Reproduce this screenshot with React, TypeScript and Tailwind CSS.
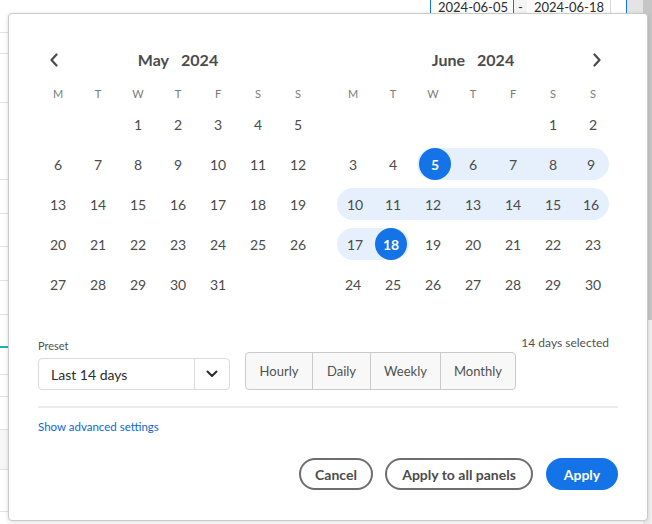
import { useState } from "react";

type Week = (number | null)[];

const WEEKDAYS = ["M", "T", "W", "T", "F", "S", "S"];
const RANGE_START = 5;
const RANGE_END = 18;

function buildWeeks(offset: number, days: number): Week[] {
  const cells: (number | null)[] = [];
  for (let i = 0; i < offset; i++) cells.push(null);
  for (let d = 1; d <= days; d++) cells.push(d);
  while (cells.length % 7 !== 0) cells.push(null);
  const weeks: Week[] = [];
  for (let i = 0; i < cells.length; i += 7) weeks.push(cells.slice(i, i + 7));
  return weeks;
}

function ChevronLeft() {
  return (
    <svg width="10" height="14" viewBox="0 0 10 14" fill="none">
      <path d="M7.5 1.5 L2.5 7 L7.5 12.5" stroke="#4b4b4b" strokeWidth="2.2" strokeLinecap="round" strokeLinejoin="round" />
    </svg>
  );
}

function ChevronRight() {
  return (
    <svg width="10" height="14" viewBox="0 0 10 14" fill="none">
      <path d="M2.5 1.5 L7.5 7 L2.5 12.5" stroke="#4b4b4b" strokeWidth="2.2" strokeLinecap="round" strokeLinejoin="round" />
    </svg>
  );
}

function ChevronDown() {
  return (
    <svg width="12" height="8" viewBox="0 0 12 8" fill="none">
      <path d="M1.5 1.5 L6 6 L10.5 1.5" stroke="#2c2c2c" strokeWidth="2" strokeLinecap="round" strokeLinejoin="round" />
    </svg>
  );
}

function Month({
  name,
  weeks,
  side,
  highlight,
}: {
  name: string;
  weeks: Week[];
  side: "left" | "right";
  highlight: boolean;
}) {
  return (
    <div className="w-[280px]">
      <div className="flex h-6 items-center">
        <div className="flex w-8 justify-center">{side === "left" ? <ChevronLeft /> : null}</div>
        <div className="flex flex-1 justify-center gap-3 text-[16px] font-bold text-[#4b4b4b]">
          <span>{name}</span>
          <span>2024</span>
        </div>
        <div className="flex w-8 justify-center">{side === "right" ? <ChevronRight /> : null}</div>
      </div>

      <div className="mt-3 grid h-5 grid-cols-7 items-center text-[11px] text-[#7a7a7a]">
        {WEEKDAYS.map((day, index) => (
          <span key={index} className="text-center">
            {day}
          </span>
        ))}
      </div>

      {weeks.map((week, row) => (
        <div key={row} className="grid grid-cols-7">
          {week.map((day, col) => {
            if (day === null) return <div key={col} className="h-10" />;

            const inRange = highlight && day >= RANGE_START && day <= RANGE_END;
            const isEdge = highlight && (day === RANGE_START || day === RANGE_END);
            const roundLeft = day === RANGE_START || col === 0;
            const roundRight = day === RANGE_END || col === 6;

            return (
              <div key={col} className="flex h-10 items-center">
                <div
                  className={`flex h-8 flex-1 items-center justify-center ${
                    inRange ? "bg-[#e6f0fc]" : ""
                  } ${inRange && roundLeft ? "ml-1 rounded-l-full" : ""} ${
                    inRange && roundRight ? "mr-1 rounded-r-full" : ""
                  }`}
                >
                  {isEdge ? (
                    <span className="flex h-8 w-8 items-center justify-center rounded-full bg-[#1473e6] text-[14px] font-bold text-white">
                      {day}
                    </span>
                  ) : (
                    <span className="text-[14px] text-[#4b4b4b]">{day}</span>
                  )}
                </div>
              </div>
            );
          })}
        </div>
      ))}
    </div>
  );
}

function Backdrop() {
  const rows = [21, 49, 77, 34, 33, 34, 34, 32, 28, 22, 33, 40, 42];

  return (
    <div className="flex h-full">
      <div className="flex flex-1 flex-col">
        <div className="flex h-[33px] items-start justify-end border-b border-[#e1e1e1]">
          <div className="flex h-[13px] items-stretch text-[13px] leading-[12px] text-[#2c2c2c]">
            <div className="flex w-[84px] items-end border-x border-[#1473e6] bg-white pl-[7px]">2024-06-05</div>
            <div className="flex w-[13px] items-end justify-center bg-[#f4f4f4]">-</div>
            <div className="flex w-[84px] items-end border-r border-[#d8d8d8] bg-white pl-[7px]">2024-06-18</div>
            <div className="w-[16px] border-r border-[#1473e6] bg-white" />
            <div className="w-[16px] bg-[#e4e4e4]" />
          </div>
        </div>
        {rows.map((height, index) => (
          <div
            key={index}
            style={{ height }}
            className={`border-b border-[#e1e1e1] ${index === 11 ? "bg-[#f7f7f7]" : ""}`}
          >
            {index === 8 ? <div className="-mt-[1px] h-[2px] w-[14px] bg-[#1cb4ae]" /> : null}
          </div>
        ))}
      </div>
      <div className="flex w-[9px] flex-col">
        <div className="h-[320px] bg-[#c6c6c6]" />
        <div className="flex-1 bg-[#f0f0f0]" />
      </div>
    </div>
  );
}

export default function App() {
  const [preset] = useState("Last 14 days");
  const [granularity, setGranularity] = useState("");

  const may = buildWeeks(2, 31);
  const june = buildWeeks(5, 30);

  return (
    <div className="relative h-[524px] w-[652px] overflow-hidden bg-white font-['Lato','Noto_Sans',sans-serif]">
      <Backdrop />

      <div className="absolute left-[8px] top-[13px] flex h-[508px] w-[640px] flex-col rounded-[4px] border border-[#cacaca] bg-white px-[29px] pt-[34px] shadow-[0_1px_4px_rgba(0,0,0,0.15)]">
        <div className="flex gap-[15px]">
          <Month name="May" weeks={may} side="left" highlight={false} />
          <Month name="June" weeks={june} side="right" highlight />
        </div>

        <div className="mt-[34px] flex items-end">
          <div>
            <div className="text-[11px] leading-4 text-[#505050]">Preset</div>
            <div className="mt-1 flex h-8 w-[192px] rounded-[4px] border border-[#dadada] bg-white">
              <div className="flex flex-1 items-center pl-3 text-[14px] text-[#2c2c2c]">{preset}</div>
              <div className="flex w-[35px] items-center justify-center border-l border-[#dadada]">
                <ChevronDown />
              </div>
            </div>
          </div>

          <div className="ml-[15px] flex h-[38px] overflow-hidden rounded-[4px] border border-[#cacaca] bg-[#f8f8f8] text-[13px] text-[#505050]">
            {[
              ["Hourly", "w-[66px]"],
              ["Daily", "w-[58px]"],
              ["Weekly", "w-[70px]"],
              ["Monthly", "w-[75px]"],
            ].map(([label, width], index) => (
              <button
                key={label}
                type="button"
                onClick={() => setGranularity(label)}
                className={`${width} pt-[2px] ${index > 0 ? "border-l border-[#cacaca]" : ""} ${
                  granularity === label ? "bg-[#eaeaea]" : ""
                }`}
              >
                {label}
              </button>
            ))}
          </div>

          <div className="-mt-[3px] ml-auto mr-[9px] self-start text-[12px] leading-4 text-[#505050]">14 days selected</div>
        </div>

        <div className="mt-4 h-[2px] bg-[#ebebeb]" />

        <div className="mt-[11px] text-[11.5px] leading-4 text-[#0d66d0]">Show advanced settings</div>

        <div className="mt-[23px] flex justify-end gap-3">
          <button
            type="button"
            className="h-8 w-[74px] rounded-full border-2 border-[#6e6e6e] text-[14px] font-bold text-[#4b4b4b]"
          >
            Cancel
          </button>
          <button
            type="button"
            className="h-8 w-[148px] rounded-full border-2 border-[#6e6e6e] text-[14px] font-bold text-[#4b4b4b]"
          >
            Apply to all panels
          </button>
          <button
            type="button"
            className="ml-[1px] h-8 w-[72px] rounded-full bg-[#1473e6] text-[14px] font-bold text-white"
          >
            Apply
          </button>
        </div>
      </div>
    </div>
  );
}
